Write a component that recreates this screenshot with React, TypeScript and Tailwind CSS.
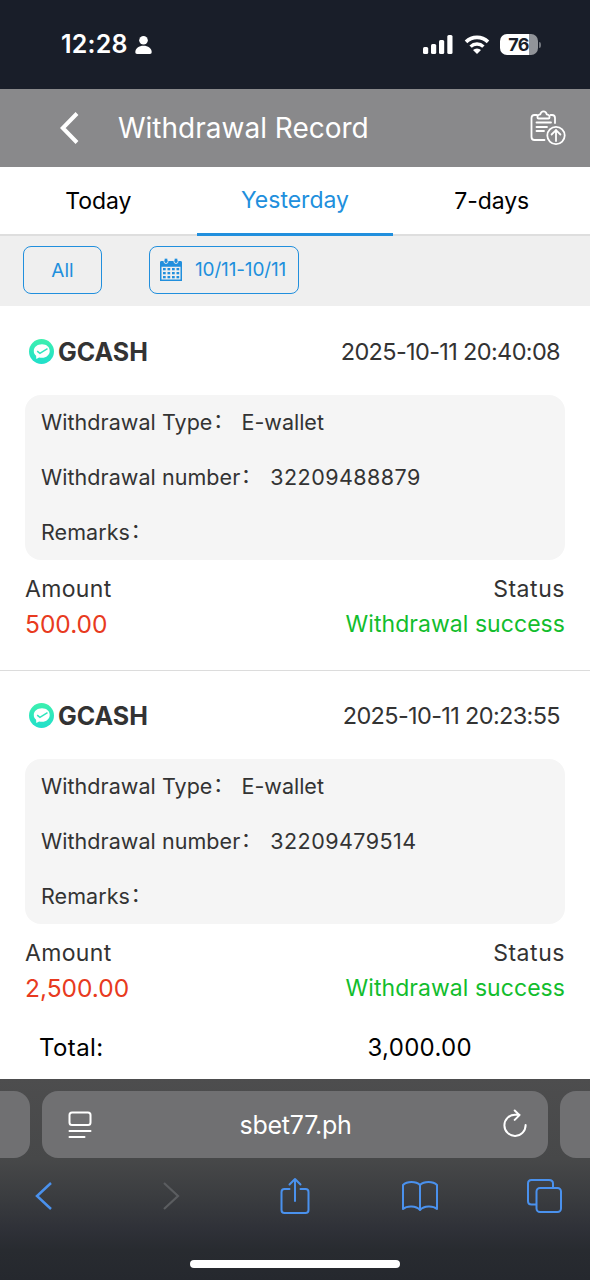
import clsx from 'clsx';

interface WithdrawalRecord {
  id: string;
  time: string;
  number: string;
  amount: string;
}

const tabs = [
  { name: 'Today', tracking: 'tracking-[-0.1px]' },
  { name: 'Yesterday', tracking: 'tracking-[0px]' },
  { name: '7-days', tracking: 'tracking-[-0.1px]' },
];

const records: WithdrawalRecord[] = [
  { id: '1', time: '2025-10-11 20:40:08', number: '32209488879', amount: '500.00' },
  { id: '2', time: '2025-10-11 20:23:55', number: '32209479514', amount: '2,500.00' },
];

function StatusBar() {
  return (
    <div className="flex h-[89px] items-center justify-between bg-[#191e29] pl-[61px] pr-[49px] text-white">
      <div className="flex items-center gap-[7px]">
        <span className="text-[25px] font-semibold leading-none tracking-[0.2px]">12:28</span>
        <svg className="h-[18px] w-[17px]" viewBox="0 0 17 18" fill="currentColor">
          <circle cx="8.5" cy="4.3" r="4.3" />
          <path d="M0.3 16C0.3 12.5 4 9.800 8.500 9.800s8.200 2.700 8.200 6.200c0 1.300-.6 2-1.800 2H2.100C.9 18 .3 17.300.3 16z" />
        </svg>
      </div>
      <div className="flex items-center">
        <svg className="h-[19px] w-[30px]" viewBox="0 0 30 19" fill="currentColor">
          <rect x="0" y="12" width="5.200" height="7" rx="1.500" />
          <rect x="8" y="9" width="5.200" height="10" rx="1.500" />
          <rect x="16" y="5" width="5.200" height="14" rx="1.500" />
          <rect x="24.300" y="0" width="5.200" height="19" rx="1.500" />
        </svg>
        <svg className="ml-[11px] h-[19px] w-[26px]" viewBox="0 0 26 19">
          <path d="M2 6.900a15.600 15.600 0 0 1 22 0" fill="none" stroke="currentColor" strokeWidth="3.600" />
          <path d="M6.600 11.600a9.200 9.200 0 0 1 12.800 0" fill="none" stroke="currentColor" strokeWidth="3.400" />
          <path d="M9 15.100a5.700 5.700 0 0 1 8 0L13 19z" fill="currentColor" />
        </svg>
        <div className="ml-[10px] flex h-[21px] w-[38px] items-center justify-center rounded-[7px] bg-[linear-gradient(90deg,#fff_76%,#919499_76%)] pr-[1px] text-[18px] font-bold leading-none tracking-[-0.8px] text-[#191e29]">
          76
        </div>
        <div className="ml-[1px] h-[6px] w-[2px] rounded-r-full bg-[#70747b]" />
      </div>
    </div>
  );
}

function Header() {
  return (
    <div className="flex h-[78px] items-center bg-[#89898b] pl-[60px] pr-[24px] text-white">
      <svg className="h-[32px] w-[19px]" viewBox="0 0 19 32" fill="none" stroke="currentColor" strokeWidth="4">
        <path d="M17 1.500L2.800 16 17 30.500" />
      </svg>
      <h1 className="ml-[39px] flex-1 text-[28px] leading-none">Withdrawal Record</h1>
      <svg className="h-[36px] w-[36px]" viewBox="0 0 36 36" fill="none" stroke="currentColor" strokeWidth="1.800" strokeLinecap="round" strokeLinejoin="round">
        <path d="M7 5H4.500C2.500 5 1.500 6 1.500 8v19c0 2 1 3 3 3H14.500" />
        <path d="M20.500 5h1.500c2 0 3 1 3 3v5" />
        <path d="M7.500 7.500V6.500C7.500 4.900 9 4.600 10.300 4.300 10.800 2.400 12 1.300 13.500 1.300s2.800 1.100 3.200 3c1.300.3 2.800.600 2.800 2.200v1c0 .7-.4 1-1 1h-10c-.6 0-1-.3-1-1z" />
        <path d="M6.500 12.500H21M6.500 17H17M6.500 21h7.500" />
        <circle cx="26" cy="25.500" r="8.700" />
        <path d="M26 31v-11M21.600 24.500l4.400-4.400 4.400 4.400" />
      </svg>
    </div>
  );
}

function Tabs() {
  return (
    <div className="grid h-[69px] grid-cols-3 border-b-2 border-[#dedede] bg-white text-[23px] text-black">
      {tabs.map(tab => (
        <button
          key={tab.name}
          className={clsx(
            'relative flex items-center justify-center',
            tab.tracking,
            tab.name === 'Yesterday' ? 'text-[#218fdd]' : 'pt-[2px]'
          )}
        >
          {tab.name}
          {tab.name === 'Yesterday' && <span className="absolute inset-x-0 -bottom-[2px] h-[3px] bg-[#218fdd]" />}
        </button>
      ))}
    </div>
  );
}

function CalendarIcon() {
  return (
    <svg className="-mt-[2px] h-[23px] w-[22px]" viewBox="0 0 22 23" fill="currentColor">
      <path fillRule="evenodd" d="M0 4.500C0 3.500.6 3 1.500 3h19c.9 0 1.500.5 1.500 1.500V23H0zM1.500 8.700v12.800h19V8.700z" />
      <rect x="4" y="0" width="4" height="5.500" rx="2" stroke="#efefef" strokeWidth="0.900" />
      <rect x="14" y="0" width="4" height="5.500" rx="2" stroke="#efefef" strokeWidth="0.900" />
      {[10, 14, 18].map(y =>
        [3, 7.5, 12, 16.5].map(x => <rect key={`${x}-${y}`} x={x} y={y} width="2.700" height="2.300" />)
      )}
    </svg>
  );
}

function Filters() {
  return (
    <div className="flex h-[70px] items-start gap-[47px] bg-[#efefef] pl-[23px] pt-[10px] text-[19px] text-[#218fdd]">
      <button className="h-[48px] w-[79px] rounded-[8px] border-[1.5px] border-[#218fdd] pt-[2px]">All</button>
      <button className="flex h-[48px] w-[150px] items-center rounded-[8px] border-[1.5px] border-[#218fdd] pl-[10px]">
        <CalendarIcon />
        <span className="ml-[13px] whitespace-nowrap pt-[1px] tracking-[-0.15px]">10/11-10/11</span>
      </button>
    </div>
  );
}

function GcashLogo() {
  return (
    <svg className="h-[25px] w-[25px]" viewBox="0 0 25 25">
      <defs>
        <linearGradient id="gcash" x1="0" y1="0" x2="0" y2="1">
          <stop offset="0" stopColor="#3df0ae" />
          <stop offset="1" stopColor="#20dfcb" />
        </linearGradient>
      </defs>
      <circle cx="12.500" cy="12.500" r="12.500" fill="url(#gcash)" />
      <path d="M13 5.300c4.600 0 7.700 2.800 7.700 6.700s-3.200 6.800-7.700 6.800c-1 0-2-.1-2.900-.4L7.300 20l-.2-3.200C5.600 15.700 4.800 14 4.800 12c0-3.900 3.500-6.700 8.200-6.700z" fill="#fff" />
      <path d="M8.200 12.200l2.700 2.200 7.600-4.700" fill="none" stroke="#2ee5bd" strokeWidth="1.500" />
    </svg>
  );
}

function Field({ label, value }: { label: string; value?: string }) {
  return (
    <div className="flex h-[55px] items-center">
      <span className="tracking-[0.05px]">{label}</span>
      <span className="w-[29px] pb-[1px] pl-[1px] text-[19px] font-medium">：</span>
      {value && (
        <span className={clsx(value.length > 10 ? 'ml-[1px] tracking-[0.45px]' : 'tracking-[0px]')}>{value}</span>
      )}
    </div>
  );
}

function RecordItem({ record }: { record: WithdrawalRecord }) {
  return (
    <div className="h-[364px] px-[25px] pt-[24px] text-[#333]">
      <div className="flex h-[43px] items-center pl-[4px] pr-[5px]">
        <GcashLogo />
        <span className="ml-[4px] flex-1 pt-[2px] text-[25px] font-bold">GCASH</span>
        <span className="pt-[1px] text-[23.5px] tracking-[-0.65px]">{record.time}</span>
      </div>
      <div className="mt-[22px] h-[165px] rounded-[16px] bg-[#f5f5f5] px-[16px] text-[21.5px]">
        <Field label="Withdrawal Type" value="E-wallet" />
        <Field label="Withdrawal number" value={record.number} />
        <Field label="Remarks" />
      </div>
      <div className="mt-[11px] flex justify-between text-[23px] leading-[36px]">
        <div>
          <div className="tracking-[0.35px]">Amount</div>
          <div className="-mt-px text-[24.5px] text-[#e83a20]">{record.amount}</div>
        </div>
        <div className="text-right">
          <div className="tracking-[0.55px]">Status</div>
          <div className="-mt-px tracking-[0.05px] text-[#12bd2d]">Withdrawal success</div>
        </div>
      </div>
    </div>
  );
}

function BrowserBar() {
  return (
    <div className="h-[201px] overflow-hidden bg-[linear-gradient(180deg,#4d4d4e_0%,#474849_40%,#3b3d40_58%,#2e3037_76%,#282b30_85%,#25282e_100%)]">
      <div className="mt-[12px] flex h-[67px] gap-[12px]">
        <div className="w-[30px] shrink-0 rounded-r-[16px] bg-[#707072]" />
        <div className="flex w-[506px] shrink-0 items-center rounded-[16px] bg-[#707072] pl-[26px] pr-[20px] text-white">
          <svg className="h-[28px] w-[24px]" viewBox="0 0 24 28" fill="none" stroke="currentColor" strokeWidth="2" strokeLinecap="round">
            <rect x="1.500" y="1.500" width="21" height="12.500" rx="2.500" />
            <path d="M1.500 20h21M1.500 26h15" />
          </svg>
          <span className="flex-1 pr-[3px] pt-[2px] text-center text-[25px] tracking-[-0.25px]">sbet77.ph</span>
          <svg className="-mt-[2px] h-[30px] w-[26px]" viewBox="0 0 26 30" fill="none" stroke="currentColor" strokeWidth="2" strokeLinecap="round" strokeLinejoin="round">
            <path d="M23.600 16a10.600 10.600 0 1 1-10.600-10.300h4.500M12.700 1.500l4.800 4.600-4.800 4.800" />
          </svg>
        </div>
        <div className="w-[30px] shrink-0 rounded-l-[16px] bg-[#707072]" />
      </div>
      <div className="flex h-[76px] items-center justify-between pl-[34px] pr-[28px] text-[#4a91ed]">
        <svg className="h-[30px] w-[20px]" viewBox="0 0 20 30" fill="none" stroke="currentColor" strokeWidth="2.500">
          <path d="M17 2L3 15l14 13" />
        </svg>
        <svg className="ml-[24px] h-[30px] w-[20px] text-[#5b5d60]" viewBox="0 0 20 30" fill="none" stroke="currentColor" strokeWidth="2.200">
          <path d="M3 2l14 13L3 28" />
        </svg>
        <svg className="ml-[16px] h-[38px] w-[30px]" viewBox="0 0 30 38" fill="none" stroke="currentColor" strokeWidth="2" strokeLinecap="round" strokeLinejoin="round">
          <path d="M9.500 12H4.500C2.500 12 1.500 13 1.500 15v18c0 2 1 3 3 3h21c2 0 3-1 3-3V15c0-2-1-3-3-3h-5M15 24V2M9.500 7.500L15 2l5.500 5.500" />
        </svg>
        <svg className="ml-[9px] h-[32px] w-[38px]" viewBox="0 0 38 32" fill="none" stroke="currentColor" strokeWidth="2" strokeLinejoin="round">
          <path d="M19 30c-4-4.500-13-4.500-17-1V5C6 1 15 1 19 5c4-4 13-4 17 0v24c-4-3.500-13-3.500-17 1zM19 5v25" />
        </svg>
        <svg className="ml-[5px] h-[34px] w-[35px]" viewBox="0 0 35 34" fill="none" stroke="currentColor" strokeWidth="2">
          <rect x="9.500" y="9" width="24.500" height="24" rx="3.500" />
          <path d="M9.500 25.500H4.500c-2 0-3.500-1-3.500-3.500V4.500C1 2.500 2 1 4.500 1h17.500C24.500 1 26 2.500 26 4.500V9" />
        </svg>
      </div>
      <div className="mx-auto mt-[26px] h-[8px] w-[210px] rounded-full bg-white" />
    </div>
  );
}

export default function App() {
  return (
    <div className="flex h-[1280px] w-[590px] flex-col overflow-hidden bg-white font-['Inter','Noto_Sans_CJK_SC',sans-serif]">
      <StatusBar />
      <Header />
      <Tabs />
      <Filters />
      <div className="h-[773px]">
        {records.map((record, index) => (
          <div key={record.id}>
            {index > 0 && <div className="-mb-px h-px bg-[#dcdcdc]" />}
            <RecordItem record={record} />
          </div>
        ))}
        <div className="-mt-[4px] flex pl-[39px] text-[24px] leading-[36px] text-black">
          <span className="w-[328.5px] tracking-[0.4px]">Total:</span>
          <span className="tracking-[0.3px]">3,000.00</span>
        </div>
      </div>
      <BrowserBar />
    </div>
  );
}
